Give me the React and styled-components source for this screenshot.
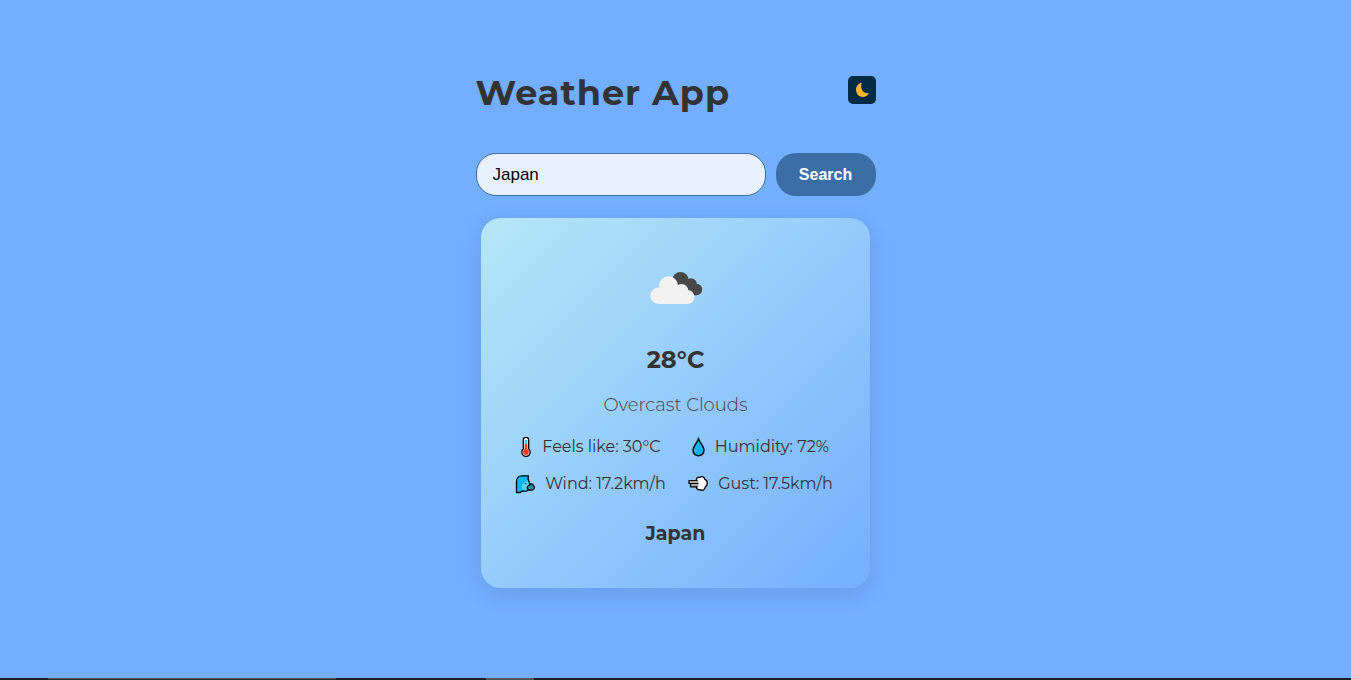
import React, { useState } from 'react';
import styled, { createGlobalStyle } from 'styled-components';

const GlobalStyle = createGlobalStyle`
  * { box-sizing: border-box; }
  body {
    margin: 0;
    background: #74aeff;
    color: #333;
    font-family: Montserrat, Inter, sans-serif;
  }
`;

const Page = styled.div`
  display: flex;
  flex-direction: column;
  min-height: 100vh;
`;

const Main = styled.main`
  flex: 1;
  width: 100%;
  max-width: 400px;
  margin: 0 auto;
  padding: 69px 0 24px;
`;

const Header = styled.header`
  display: flex;
  justify-content: space-between;
  align-items: flex-start;
  margin-bottom: 36px;
`;

const Title = styled.h1`
  margin: 0;
  font-size: 35px;
  line-height: 48px;
  font-weight: 700;
  letter-spacing: 1px;
`;

const ThemeButton = styled.button`
  display: grid;
  place-items: center;
  width: 28px;
  height: 28px;
  margin-top: 7px;
  padding: 0;
  border: 0;
  border-radius: 5px;
  background: #032b43;
  cursor: pointer;
`;

const SearchForm = styled.form`
  display: flex;
  gap: 10px;
  margin-bottom: 22px;
`;

const SearchInput = styled.input`
  flex: 1;
  min-width: 0;
  height: 43px;
  padding: 0 16px;
  border: 1px solid #3a6ea5;
  border-radius: 20px;
  background: #e8f0fe;
  color: #000;
  font: 17px "Liberation Sans", Arial, sans-serif;
`;

const SearchButton = styled.button`
  width: 100px;
  height: 43px;
  border: 0;
  border-radius: 20px;
  background: #3a6ea5;
  color: #fff;
  font: bold 16px "Liberation Sans", Arial, sans-serif;
  cursor: pointer;
`;

const Card = styled.section`
  display: flex;
  flex-direction: column;
  align-items: center;
  margin: 0 6px 0 5px;
  padding: 20px 24px 42px 25px;
  border-radius: 20px;
  background: linear-gradient(135deg, #b5e8f7, #74aeff);
  box-shadow: 0 6px 24px rgba(0, 0, 0, 0.1);
`;

const Temperature = styled.h2`
  margin: 7px 0 0;
  font-size: 24px;
  line-height: 30px;
  font-weight: 700;
`;

const Condition = styled.p`
  margin: 18px 0;
  color: #444;
  font-size: 18px;
  line-height: 24px;
  font-weight: 300;
`;

const Details = styled.ul`
  display: grid;
  grid-template-columns: 1fr 1fr;
  row-gap: 13px;
  width: 100%;
  margin: 0 0 26px;
  padding: 0;
  list-style: none;
`;

const Detail = styled.li`
  display: flex;
  justify-content: center;
  align-items: center;
  gap: 10px;
  font-size: 16px;
  line-height: 24px;
  white-space: nowrap;
`;

const Place = styled.h3`
  margin: 0;
  font-size: 19px;
  line-height: 24px;
  font-weight: 700;
`;

const Taskbar = styled.footer`
  display: flex;
  height: 2px;
  padding-left: 48px;
  gap: 150px;
  background: #1d1c28;
`;

const TaskbarItem = styled.span`
  width: ${({ $wide }) => ($wide ? '288px' : '48px')};
  background: #555;
  border-bottom: ${({ $wide }) => ($wide ? '1px solid #333' : '0')};
`;

const MoonIcon = () => (
  <svg width="14" height="16" viewBox="0 0 14 16" aria-hidden="true">
    <path d="M6.700.4C3 1.500 1 4 1 7.600 1 11.800 4 15 7.500 15c3 0 5.500-1.500 6.500-4.300-2 .7-4.300.3-5.800-1.200C6 7.300 5.700 3.800 6.700.4Z" fill="#ffb52e" />
  </svg>
);

const CloudsIcon = () => (
  <svg width="100" height="100" viewBox="0 0 100 100" aria-hidden="true">
    <g fill="#484848">
      <circle cx="54.500" cy="42" r="8" />
      <circle cx="65" cy="46" r="5.800" />
      <circle cx="70.500" cy="51.500" r="5.700" />
      <path d="M55 42h10l5.500 15.200H60Z" />
    </g>
    <g fill="#f1f1f1">
      <circle cx="32.500" cy="57.800" r="8.200" />
      <circle cx="42.500" cy="47.700" r="9.500" />
      <circle cx="55.500" cy="53" r="7" />
      <circle cx="61.500" cy="59" r="7" />
      <path d="M32.500 50h18l11 9v7h-29Z" />
    </g>
  </svg>
);

const ThermometerIcon = () => (
  <svg width="12" height="20" viewBox="0 0 12 20" aria-hidden="true">
    <path d="M3.300 3a2.700 2.700 0 0 1 5.400 0v9a4.200 4.200 0 1 1-5.400 0Z" fill="#fff" stroke="#000" strokeWidth="1.300" />
    <path d="M6 3v4" stroke="#42c7f5" strokeWidth="2.600" />
    <path d="M6 7v8" stroke="#f23a22" strokeWidth="2.600" />
    <circle cx="6" cy="15" r="2.900" fill="#f23a22" />
  </svg>
);

const DropIcon = () => (
  <svg width="13" height="20" viewBox="0 0 13 20" aria-hidden="true">
    <path d="M6.500 1.800C5.200 5.800 1 9.300 1 13.300a5.500 5.500 0 0 0 11 0c0-4-4.200-7.500-5.500-11.500Z" fill="#00b6ef" stroke="#000" strokeWidth="1.400" />
  </svg>
);

const WindIcon = () => (
  <svg width="20" height="20" viewBox="0 0 20 20" aria-hidden="true">
    <path d="M1.500 18.500V8C1.500 4 3.500 1.800 7 1.800h6.500l-.5 3 1.800 5-.5 5.700-3 1.700H7l-1.800 1.300Z" fill="#00b7ef" stroke="#000" strokeWidth="1.300" strokeLinejoin="round" />
    <path d="M7 11l5-5 1.800 4v5.500L10 16.500 7 15Z" fill="#5fcdf2" />
    <path d="M13 12c1-1.500 2.500-.5 3-2.200 1.500-.3 2.200.5 2 1.700 1.800.5 1.700 2.700.7 3.500-.7 1.500-3.500 1.500-4.500.7-1.800.3-2.500-2-1.200-3.700Z" fill="#2a8fa8" stroke="#000" strokeWidth="1.200" />
    <circle cx="10.500" cy="9.500" r=".8" fill="#126585" />
  </svg>
);

const GustIcon = () => (
  <svg width="20" height="20" viewBox="0 0 20 20" aria-hidden="true">
    <path d="M8.500 7C7.800 4 10 2.500 12 3.300c1.800-1.300 4.600-.3 4.800 2 3 .8 3.500 6.200.4 7.700 0 2.800-3 4-5 2.700-2.200.8-4-.8-3.700-3.200Z" fill="#fff" stroke="#000" strokeWidth="1.300" />
    <path d="M1 6.500h9.500v6.300h-8v-2.800H1Z" fill="#aaa" />
    <path d="M9.500 6.500H1v3h9.500M2.500 9.500v3.300h7" fill="none" stroke="#000" strokeWidth="1.200" strokeLinejoin="round" />
  </svg>
);

const details = [
  { Icon: ThermometerIcon, text: 'Feels like: 30°C' },
  { Icon: DropIcon, text: 'Humidity: 72%' },
  { Icon: WindIcon, text: 'Wind: 17.2km/h' },
  { Icon: GustIcon, text: 'Gust: 17.5km/h' },
];

export default function App() {
  const [city, setCity] = useState('Japan');
  return (
    <Page>
      <GlobalStyle />
      <Main>
        <Header>
          <Title>Weather App</Title>
          <ThemeButton type="button" aria-label="Toggle dark mode"><MoonIcon /></ThemeButton>
        </Header>
        <SearchForm onSubmit={(event) => event.preventDefault()}>
          <SearchInput aria-label="City" value={city} onChange={(event) => setCity(event.target.value)} />
          <SearchButton type="submit">Search</SearchButton>
        </SearchForm>
        <Card>
          <CloudsIcon />
          <Temperature>28°C</Temperature>
          <Condition>Overcast Clouds</Condition>
          <Details>
            {details.map(({ Icon, text }) => (
              <Detail key={text}><Icon />{text}</Detail>
            ))}
          </Details>
          <Place>Japan</Place>
        </Card>
      </Main>
      <Taskbar>
        <TaskbarItem $wide />
        <TaskbarItem />
      </Taskbar>
    </Page>
  );
}
